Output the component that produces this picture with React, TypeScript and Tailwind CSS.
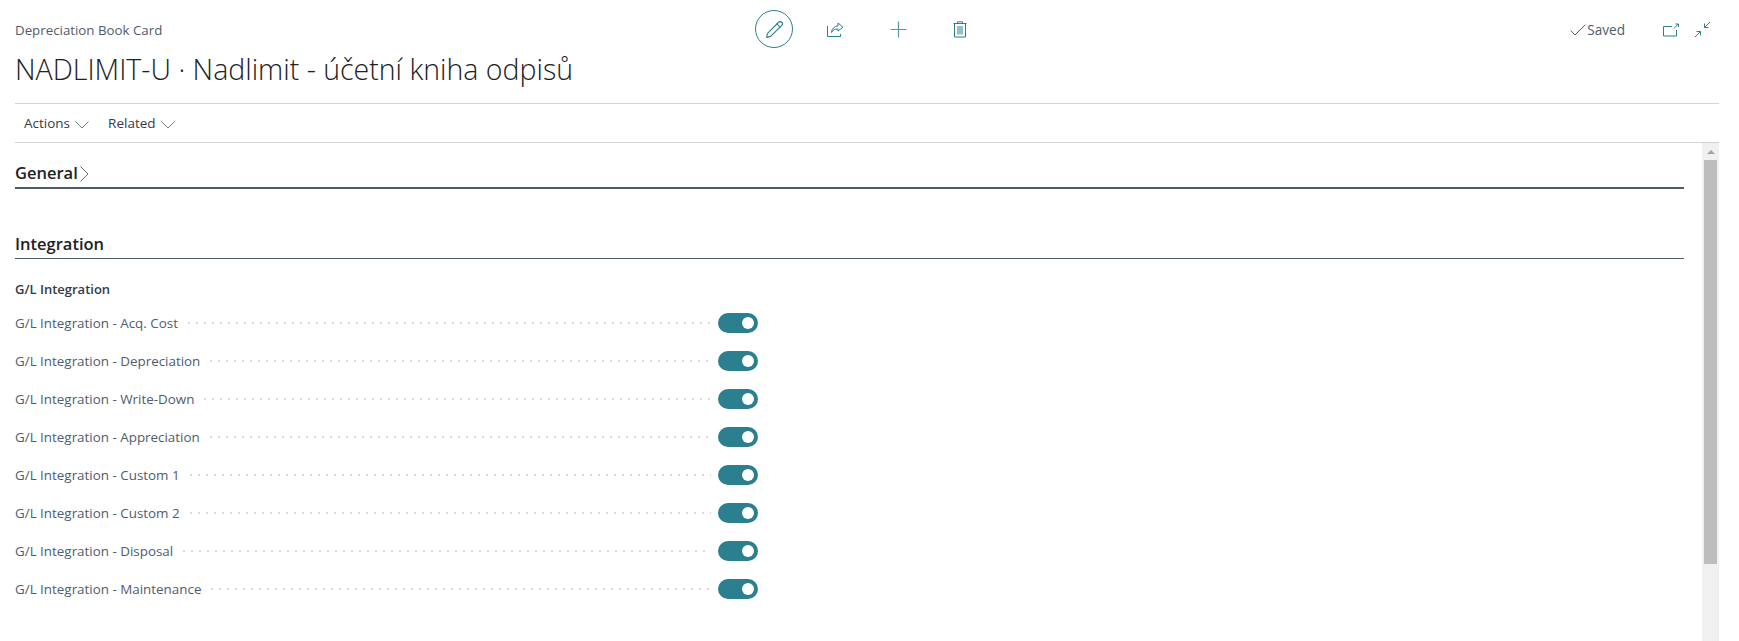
import { Pencil } from 'lucide-react';

const rows = [
  'G/L Integration - Acq. Cost',
  'G/L Integration - Depreciation',
  'G/L Integration - Write-Down',
  'G/L Integration - Appreciation',
  'G/L Integration - Custom 1',
  'G/L Integration - Custom 2',
  'G/L Integration - Disposal',
  'G/L Integration - Maintenance',
];

function ShareIcon() {
  return (
    <svg width="17" height="15" viewBox="0 0 17 15" fill="none" stroke="#2b7f8e" strokeWidth="1">
      <path d="M0.5 4v10.5h13V12" />
      <path d="M11 1 16 5.2 11 9V7C8 6.8 5.8 8 4.5 10.5 4.8 6.5 7.4 4.2 11 3.8Z" />
    </svg>
  );
}

function PlusIcon() {
  return (
    <svg width="17" height="17" viewBox="0 0 17 17" fill="none" stroke="#2b7f8e" strokeWidth="1.2" opacity="0.8">
      <path d="M8.5 0.5v16M0.5 8.5h16" />
    </svg>
  );
}

function TrashIcon() {
  return (
    <svg width="14" height="17" viewBox="0 0 14 17" fill="none" stroke="#2b7f8e" strokeWidth="1">
      <path d="M0.5 2.5h13M4.5 2.5V0.8h5v1.7M1.5 2.5v13.5h11V2.5M5 5v8.5M7 5v8.5M9 5v8.5" />
    </svg>
  );
}

function OpenIcon() {
  return (
    <svg width="16" height="14" viewBox="0 0 16 14" fill="none" stroke="#2b7f8e" strokeWidth="1">
      <path d="M9 3.5H0.5v9.5h13V7" />
      <path d="M11 5.5 15 1.2M12.5 1h3v3" />
    </svg>
  );
}

function CollapseIcon() {
  return (
    <svg width="17" height="17" viewBox="0 0 17 17" fill="none" stroke="#2b7f8e" strokeWidth="1">
      <path d="M16 1 10.5 6.5M10.5 2.5v4h4" />
      <path d="M1 16 6.5 10.5M2.5 10.5h4v4" />
    </svg>
  );
}

function Caret() {
  return (
    <svg width="14" height="8" viewBox="0 0 14 8" fill="none" stroke="#505c6d" strokeWidth="0.8" className="ml-[5px] mt-[2px]">
      <path d="M0.5 0.5 7 7 13.5 0.5" />
    </svg>
  );
}

function Toggle() {
  return (
    <div className="w-10 h-5 rounded-full bg-[#2b7f8f] flex items-center justify-end pr-[4px]">
      <div className="w-3 h-3 rounded-full bg-white" />
    </div>
  );
}

export default function App() {
  return (
    <div className="h-[641px] w-[1739px] overflow-hidden bg-white flex flex-col pl-[15px] pr-[20px] font-['Open_Sans','Noto_Sans',sans-serif]">
      {/* header */}
      <div className="h-[104px] shrink-0 border-b border-[#d4d4d6]">
        <div className="flex items-start">
          <div className="w-[740px] shrink-0">
            <div className="pt-[21px] text-[13.3px] leading-[18px] text-[#505c6d]">Depreciation Book Card</div>
            <div className="mt-[11px] text-[28.5px] leading-[38px] font-light text-[#212121] whitespace-nowrap">
              NADLIMIT-U · Nadlimit - účetní kniha odpisů
            </div>
          </div>
          <div className="flex items-center pt-[10px]">
            <div className="w-[38px] h-[38px] rounded-full border border-[#2b7f8e] flex items-center justify-center">
              <Pencil size={19} strokeWidth={1.4} color="#2b7f8e" />
            </div>
            <div className="ml-[34px]"><ShareIcon /></div>
            <div className="ml-[46px]"><PlusIcon /></div>
            <div className="ml-[46px]"><TrashIcon /></div>
          </div>
          <div className="ml-auto flex items-center pt-[21px]">
            <svg width="16" height="12" viewBox="0 0 16 12" fill="none" stroke="#505c6d" strokeWidth="1">
              <path d="M0.8 6.5 5 11 15.2 0.8" />
            </svg>
            <span className="ml-[1px] text-[13.6px] leading-[16px] text-[#505c6d]">Saved</span>
            <div className="ml-[38px]"><OpenIcon /></div>
            <div className="ml-[15px] mr-[8px]"><CollapseIcon /></div>
          </div>
        </div>
      </div>

      {/* action bar */}
      <div className="h-[39px] shrink-0 border-b border-[#d4d4d6] flex items-center pl-[9px] pt-[1px] text-[13.5px] text-[#333b47]">
        <span>Actions</span>
        <Caret />
        <span className="ml-[19px]">Related</span>
        <Caret />
      </div>

      <div className="flex-1 flex min-h-0">
        <div className="flex-1 min-w-0 pr-[18px]">
          {/* General */}
          <div className="h-[46px] border-b-2 border-[#505c6d] flex items-end pb-[2px] text-[#212121]">
            <span className="text-[16.5px] leading-[24px] font-semibold">General</span>
            <svg width="9" height="16" viewBox="0 0 9 16" fill="none" stroke="#505c6d" strokeWidth="0.9" className="ml-[2px] mb-[3px]">
              <path d="M0.5 0.5 8 8 0.5 15.5" />
            </svg>
          </div>

          {/* Integration */}
          <div className="mt-[40px] h-[30px] border-b border-[#505c6d] flex items-end pb-[2px] text-[16.5px] leading-[24px] font-semibold text-[#212121]">
            Integration
          </div>

          <div className="mt-[21px] text-[13px] leading-[18px] font-semibold text-[#333b47]">G/L Integration</div>

          <div className="mt-[6px] w-[743px] flex flex-col">
            {rows.map((r) => (
              <div key={r} className="h-[38px] flex items-center">
                <span className="text-[13.4px] whitespace-nowrap text-[#505c6d]">{r}</span>
                <div className="flex-1 ml-[10px] mr-[7px] h-[2px] bg-[linear-gradient(to_right,#d9d9d9_2px,transparent_2px)] bg-[length:8px_2px] bg-repeat-x" />
                <Toggle />
              </div>
            ))}
          </div>
        </div>

        {/* scrollbar */}
        <div className="w-[17px] shrink-0 bg-[#f0f0f0] flex flex-col items-center">
          <div className="h-[17px] shrink-0 flex items-center justify-center">
            <div className="w-0 h-0 border-l-[4px] border-r-[4px] border-b-[4px] border-l-transparent border-r-transparent border-b-[#a3a3a3]" />
          </div>
          <div className="w-[13px] h-[404px] bg-[#bdbdbd]" />
        </div>
      </div>
    </div>
  );
}
